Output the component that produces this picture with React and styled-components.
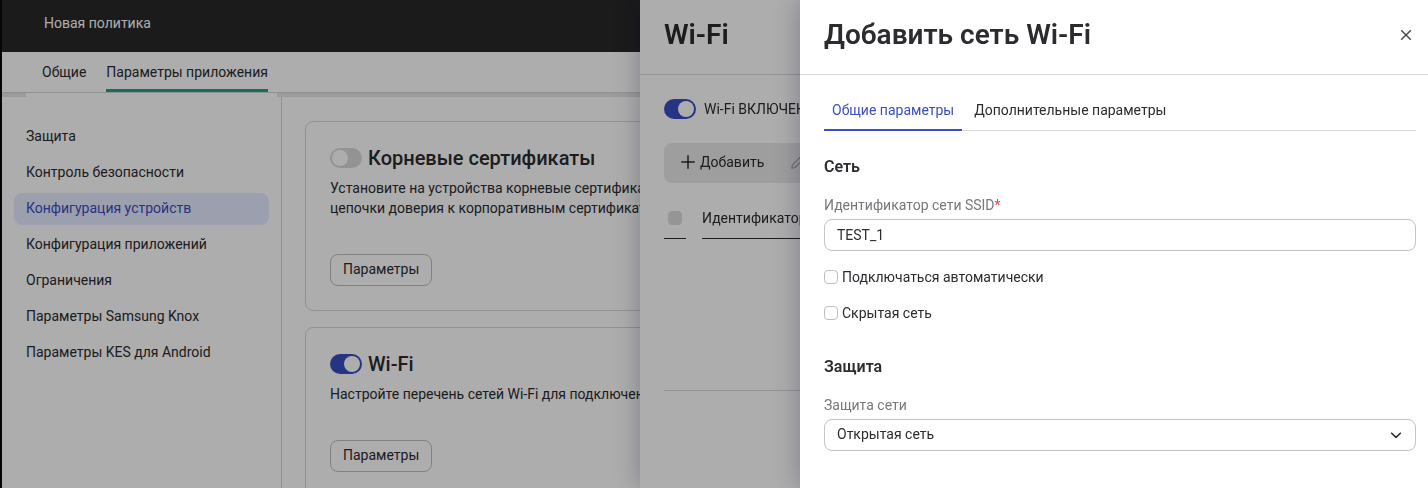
import React, { useState } from "react";
import styled, { createGlobalStyle } from "styled-components";

const GlobalStyle = createGlobalStyle`
  * {
    box-sizing: border-box;
  }

  body {
    margin: 0;
    overflow: hidden;
    background: #0a0a0a;
    color: #2b2b30;
    font-family: Roboto, "Liberation Sans", sans-serif;
    font-size: 14px;
    line-height: 20px;
  }

  h1, h2, h3, p {
    margin: 0;
  }

  button, input, select {
    font: inherit;
    color: inherit;
  }
`;

const Page = styled.div`
  min-height: 100vh;
  margin-left: 2px;
  display: flex;
  flex-direction: column;
  background: #ffffff;
`;

const PageHeader = styled.header`
  height: 52px;
  display: flex;
  align-items: center;
  padding: 0 42px 6px;
  background: #282828;
  color: #ffffff;
`;

const PageTabs = styled.nav`
  height: 41px;
  display: flex;
  gap: 20px;
  padding: 0 40px;
  border-bottom: 1px solid #d2d4d8;
`;

const PageTab = styled.a`
  padding-top: 10px;
  color: inherit;
  text-decoration: none;
  border-bottom: 3px solid ${(props) => (props.$active ? "#23a286" : "transparent")};
`;

const Strip = styled.div`
  height: 4px;
  padding: 0 24px;
  background: #e4e5e9;

  &::before {
    content: "";
    display: block;
    width: 251px;
    height: 4px;
    background: #ffffff;
  }
`;

const PageBody = styled.div`
  flex: 1;
  display: flex;
`;

const Sidebar = styled.nav`
  width: 280px;
  flex-shrink: 0;
  display: flex;
  flex-direction: column;
  gap: 4px;
  padding: 24px 12px;
  border-right: 1px solid #d5d6d9;
`;

const SidebarLink = styled.a`
  padding: 5px 12px 7px;
  border-radius: 8px;
  color: ${(props) => (props.$active ? "#3a4bc0" : "#2b2b30")};
  background: ${(props) => (props.$active ? "#e6ebff" : "transparent")};
  text-decoration: none;
`;

const Cards = styled.main`
  flex: 1;
  display: flex;
  flex-direction: column;
  gap: 16px;
  padding: 24px 23px 0;
`;

const Card = styled.section`
  display: flex;
  flex-direction: column;
  align-items: flex-start;
  gap: 8px;
  padding: 24px;
  border: 1px solid #d5d6d9;
  border-radius: 8px;
`;

const CardHead = styled.div`
  display: flex;
  align-items: center;
  gap: 6px;
`;

const CardTitle = styled.h2`
  font-size: 20px;
  line-height: 24px;
  font-weight: 500;
`;

const CardText = styled.p`
  margin-bottom: 28px;
  white-space: pre-line;
`;

const OutlineButton = styled.button`
  height: 32px;
  padding: 0 12px 2px;
  border: 1px solid #bdbec2;
  border-radius: 8px;
  background: transparent;
`;

const Switch = styled.input.attrs({ type: "checkbox", role: "switch" })`
  appearance: none;
  width: 32px;
  height: 20px;
  margin: 0;
  padding: 2px;
  border-radius: 10px;
  background: #d9d9db;
  display: flex;

  &::before {
    content: "";
    width: 16px;
    height: 16px;
    border-radius: 50%;
    background: #ffffff;
  }

  &:checked {
    justify-content: flex-end;
    background: #3a4dc1;
  }
`;

const Drawer = styled.aside`
  position: fixed;
  inset: 0 0 0 ${(props) => props.$left};
  background: #ffffff;
  box-shadow: 0 0 24px rgba(0, 10, 50, 0.28);
  overflow: hidden;
`;

const Backdrop = styled.div`
  position: fixed;
  inset: 0;
  background: rgba(0, 0, 0, 0.32);
`;

const DrawerHeader = styled.header`
  height: 75px;
  display: flex;
  align-items: center;
  justify-content: space-between;
  padding: 0 12px 4px 24px;
  border-bottom: 1px solid #d9d9dc;
`;

const DrawerTitle = styled.h1`
  font-size: 28px;
  line-height: 36px;
  font-weight: 600;
`;

const CloseButton = styled.button`
  display: flex;
  padding: 4px;
  border: none;
  background: none;
`;

const DrawerBody = styled.div`
  padding: 24px 12px 0 24px;
`;

const SwitchRow = styled.label`
  display: flex;
  align-items: center;
  gap: 8px;
`;

const Toolbar = styled.div`
  height: 40px;
  display: flex;
  align-items: center;
  gap: 26px;
  margin: 24px 0;
  padding: 0 16px 2px;
  border-radius: 8px;
  background: #e9e9eb;
`;

const ToolButton = styled.button`
  display: flex;
  align-items: center;
  gap: 4px;
  padding: 0;
  border: none;
  background: none;
  white-space: nowrap;

  &:disabled {
    color: #a2a2a8;
  }
`;

const Table = styled.table`
  width: 100%;
  height: 184px;
  border-collapse: collapse;
  border-bottom: 1px solid #d5d6d9;

  th {
    height: 31px;
    padding: 0 0 8px;
    border-bottom: 1px solid #2b2b30;
    font-weight: 400;
    text-align: left;
  }

  th:first-child {
    width: 22px;
    padding-left: 4px;
  }

  th:nth-child(2) {
    width: 16px;
    border: none;
  }
`;

const Checkbox = styled.input.attrs({ type: "checkbox" })`
  appearance: none;
  display: block;
  width: 14px;
  height: 14px;
  margin: 0;
  border: 1px solid #bdbec2;
  border-radius: 4px;
  background: #ffffff;

  &:disabled {
    border-color: #dcdcdf;
    background: #dcdcdf;
  }

  &:checked {
    border-color: #3a4dc1;
    background: #3a4dc1;
  }
`;

const Tabs = styled.div`
  display: flex;
  border-bottom: 1px solid #d9d9dc;
`;

const Tab = styled.button`
  height: 32px;
  margin-bottom: -1px;
  margin-right: 4px;
  padding: 0 8px 8px;
  border: none;
  border-bottom: 2px solid ${(props) => (props.$active ? "#3a4dc1" : "transparent")};
  background: none;
  color: ${(props) => (props.$active ? "#3a4dc1" : "#2b2b30")};
`;

const Section = styled.section`
  padding-top: 24px;
  margin-bottom: 8px;
`;

const SectionTitle = styled.h3`
  margin-bottom: 16px;
  font-size: 16px;
  line-height: 24px;
  font-weight: 600;
`;

const FieldLabel = styled.label`
  display: block;
  margin-bottom: 4px;
  color: #77777d;
`;

const Required = styled.span`
  color: #f04438;
`;

const TextInput = styled.input`
  display: block;
  width: 100%;
  height: 32px;
  padding: 0 12px;
  border: 1px solid #c4c4c8;
  border-radius: 8px;
  background: #ffffff;
`;

const SelectBox = styled.div`
  display: grid;
  align-items: center;

  > * {
    grid-area: 1 / 1;
  }

  svg {
    justify-self: end;
    margin-right: 12px;
    pointer-events: none;
  }
`;

const Select = styled.select`
  appearance: none;
  width: 100%;
  height: 32px;
  padding: 0 12px 2px;
  border: 1px solid #c4c4c8;
  border-radius: 8px;
  background: #ffffff;
`;

const CheckList = styled.div`
  display: flex;
  flex-direction: column;
  gap: 16px;
  margin-top: 16px;
`;

const CheckRow = styled.label`
  display: flex;
  align-items: center;
  gap: 4px;
`;

const sections = [
  "Защита",
  "Контроль безопасности",
  "Конфигурация устройств",
  "Конфигурация приложений",
  "Ограничения",
  "Параметры Samsung Knox",
  "Параметры KES для Android",
];

const CloseIcon = () => (
  <svg width="12" height="12" viewBox="0 0 12 12" fill="none" stroke="#45454b" strokeWidth="1.4">
    <path d="M1.2 1.2l9.6 9.6M10.8 1.2L1.2 10.8" />
  </svg>
);

const PlusIcon = () => (
  <svg width="16" height="16" viewBox="0 0 16 16" fill="none" stroke="currentColor" strokeWidth="1.5">
    <path d="M8 1.3v13.4M1.3 8h13.4" />
  </svg>
);

const PencilIcon = () => (
  <svg width="16" height="16" viewBox="0 0 16 16" fill="none" stroke="currentColor" strokeWidth="1.2" strokeLinejoin="round">
    <path d="M1.8 14.2l.7-3.3 8.6-8.6a1.6 1.6 0 0 1 2.3 0l.3.3a1.6 1.6 0 0 1 0 2.3l-8.6 8.6zM9.7 3.7l2.6 2.6" />
  </svg>
);

const ChevronIcon = () => (
  <svg width="16" height="16" viewBox="0 0 16 16" fill="none" stroke="#2b2b30" strokeWidth="1.5">
    <path d="M3.2 5.7L8 10.4l4.8-4.7" />
  </svg>
);

const SettingsCard = ({ title, text, defaultOn }) => {
  const [on, setOn] = useState(defaultOn);

  return (
    <Card>
      <CardHead>
        <Switch aria-label={title} checked={on} onChange={() => setOn(!on)} />
        <CardTitle>{title}</CardTitle>
      </CardHead>
      <CardText>{text}</CardText>
      <OutlineButton type="button">Параметры</OutlineButton>
    </Card>
  );
};

const App = () => {
  const [section, setSection] = useState("Конфигурация устройств");
  const [tab, setTab] = useState("common");
  const [ssid, setSsid] = useState("TEST_1");

  return (
    <>
      <GlobalStyle />
      <Page>
        <PageHeader>Новая политика</PageHeader>
        <PageTabs>
          <PageTab href="#common">Общие</PageTab>
          <PageTab href="#app" $active>
            Параметры приложения
          </PageTab>
        </PageTabs>
        <Strip />
        <PageBody>
          <Sidebar>
            {sections.map((name) => (
              <SidebarLink
                key={name}
                href="#section"
                $active={name === section}
                onClick={() => setSection(name)}
              >
                {name}
              </SidebarLink>
            ))}
          </Sidebar>
          <Cards>
            <SettingsCard
              title="Корневые сертификаты"
              text={
                "Установите на устройства корневые сертификаты\nцепочки доверия к корпоративным сертификатам"
              }
              defaultOn={false}
            />
            <SettingsCard
              title="Wi-Fi"
              text="Настройте перечень сетей Wi-Fi для подключения"
              defaultOn
            />
          </Cards>
        </PageBody>
      </Page>

      <Drawer $left="640px">
        <DrawerHeader>
          <DrawerTitle>Wi-Fi</DrawerTitle>
        </DrawerHeader>
        <DrawerBody>
          <SwitchRow>
            <Switch defaultChecked />
            Wi-Fi ВКЛЮЧЕН
          </SwitchRow>
          <Toolbar>
            <ToolButton type="button">
              <PlusIcon />
              Добавить
            </ToolButton>
            <ToolButton type="button" disabled aria-label="Изменить">
              <PencilIcon />
            </ToolButton>
          </Toolbar>
          <Table>
            <thead>
              <tr>
                <th>
                  <Checkbox disabled aria-label="Выбрать все" />
                </th>
                <th />
                <th>Идентификатор</th>
              </tr>
            </thead>
            <tbody>
              <tr>
                <td colSpan={3} />
              </tr>
            </tbody>
          </Table>
        </DrawerBody>
      </Drawer>

      <Backdrop />

      <Drawer $left="800px" role="dialog" aria-labelledby="dialog-title">
        <DrawerHeader>
          <DrawerTitle id="dialog-title">Добавить сеть Wi-Fi</DrawerTitle>
          <CloseButton type="button" aria-label="Закрыть">
            <CloseIcon />
          </CloseButton>
        </DrawerHeader>
        <DrawerBody>
          <Tabs role="tablist">
            <Tab
              type="button"
              role="tab"
              $active={tab === "common"}
              onClick={() => setTab("common")}
            >
              Общие параметры
            </Tab>
            <Tab
              type="button"
              role="tab"
              $active={tab === "extra"}
              onClick={() => setTab("extra")}
            >
              Дополнительные параметры
            </Tab>
          </Tabs>
          <Section>
            <SectionTitle>Сеть</SectionTitle>
            <FieldLabel htmlFor="ssid">
              Идентификатор сети SSID<Required>*</Required>
            </FieldLabel>
            <TextInput id="ssid" value={ssid} onChange={(e) => setSsid(e.target.value)} />
            <CheckList>
              <CheckRow>
                <Checkbox />
                Подключаться автоматически
              </CheckRow>
              <CheckRow>
                <Checkbox />
                Скрытая сеть
              </CheckRow>
            </CheckList>
          </Section>
          <Section>
            <SectionTitle>Защита</SectionTitle>
            <FieldLabel htmlFor="security">Защита сети</FieldLabel>
            <SelectBox>
              <Select id="security">
                <option>Открытая сеть</option>
              </Select>
              <ChevronIcon />
            </SelectBox>
          </Section>
        </DrawerBody>
      </Drawer>
    </>
  );
};

export default App;
